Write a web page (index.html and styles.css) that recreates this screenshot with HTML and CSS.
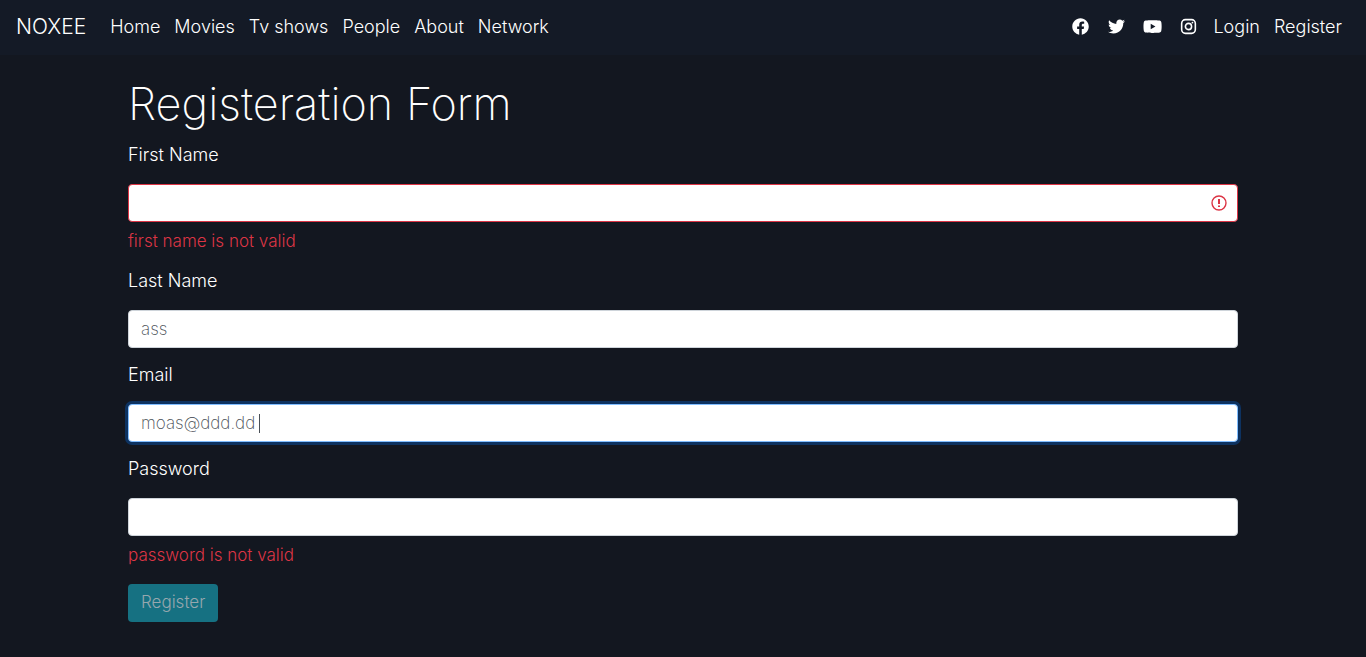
FILE: index.html
```
<!DOCTYPE html>
<html lang="en">
<head>
<meta charset="utf-8">
<meta name="viewport" content="width=device-width, initial-scale=1">
<title>Noxee</title>
<link rel="stylesheet" href="styles.css">
</head>
<body>
<nav class="navbar">
  <a class="brand" href="#">NOXEE</a>
  <ul class="nav-list">
    <li><a href="#">Home</a></li>
    <li><a href="#">Movies</a></li>
    <li><a href="#">Tv shows</a></li>
    <li><a href="#">People</a></li>
    <li><a href="#">About</a></li>
    <li><a href="#">Network</a></li>
  </ul>
  <div class="nav-end">
    <ul class="social">
      <li><a href="#" aria-label="Facebook"><svg viewBox="0 0 512 512"><path d="M504 256C504 119 393 8 256 8S8 119 8 256c0 123.780 90.690 226.380 209.250 245V327.690h-63V256h63v-54.640c0-62.150 37-96.480 93.670-96.480 27.140 0 55.520 4.840 55.520 4.840v61h-31.280c-30.800 0-40.410 19.120-40.410 38.730V256h68.780l-11 71.690h-57.780V501C413.310 482.380 504 379.780 504 256z"/></svg></a></li>
      <li><a href="#" aria-label="Twitter"><svg viewBox="0 0 512 512"><path d="M459.370 151.716c.325 4.548.325 9.097.325 13.645 0 138.720-105.583 298.558-298.558 298.558-59.452 0-114.680-17.219-161.137-47.106 8.447.974 16.568 1.299 25.340 1.299 49.055 0 94.213-16.568 130.274-44.832-46.132-.975-84.792-31.188-98.112-72.772 6.498.974 12.995 1.624 19.818 1.624 9.421 0 18.843-1.300 27.614-3.573-48.081-9.747-84.143-51.980-84.143-102.985v-1.299c13.969 7.797 30.214 12.670 47.431 13.319-28.264-18.843-46.781-51.005-46.781-87.391 0-19.492 5.197-37.360 14.294-52.954 51.655 63.675 129.300 105.258 216.365 109.807-1.624-7.797-2.599-15.918-2.599-24.040 0-57.828 46.782-104.934 104.934-104.934 30.213 0 57.502 12.670 76.670 33.137 23.715-4.548 46.456-13.320 66.599-25.340-7.798 24.366-24.366 44.833-46.132 57.827 21.117-2.273 41.584-8.122 60.426-16.243-14.292 20.791-32.161 39.308-52.628 54.253z"/></svg></a></li>
      <li><a href="#" aria-label="YouTube"><svg viewBox="0 0 576 512"><path d="M549.655 124.083c-6.281-23.650-24.787-42.276-48.284-48.597C458.781 64 288 64 288 64S117.220 64 74.629 75.486c-23.497 6.322-42.003 24.947-48.284 48.597-11.412 42.867-11.412 132.305-11.412 132.305s0 89.438 11.412 132.305c6.281 23.650 24.787 41.500 48.284 47.821C117.220 448 288 448 288 448s170.780 0 213.371-11.486c23.497-6.321 42.003-24.171 48.284-47.821 11.412-42.867 11.412-132.305 11.412-132.305s0-89.438-11.412-132.305zm-317.510 213.508V175.185l142.739 81.205-142.739 81.201z"/></svg></a></li>
      <li><a href="#" aria-label="Instagram"><svg viewBox="0 0 512 512"><g fill="none" stroke="currentColor" stroke-width="48"><rect x="50" y="50" width="412" height="412" rx="112"/><circle cx="256" cy="256" r="93"/></g><circle cx="375" cy="137" r="27"/></svg></a></li>
    </ul>
    <ul class="nav-list">
      <li><a href="#">Login</a></li>
      <li><a href="#">Register</a></li>
    </ul>
  </div>
</nav>
<main class="container">
  <h1>Registeration Form</h1>
  <form class="form">
    <div class="field">
      <label for="first">First Name</label>
      <input class="control invalid" id="first" type="text">
      <p class="error">first name is not valid</p>
    </div>
    <div class="field">
      <label for="last">Last Name</label>
      <input class="control" id="last" type="text" value="ass">
    </div>
    <div class="field">
      <label for="email">Email</label>
      <div class="entry">
        <input class="control" id="email" type="text" value="moas@ddd.dd" autofocus>
        <span class="caret"></span>
      </div>
    </div>
    <div class="field">
      <label for="password">Password</label>
      <input class="control" id="password" type="password">
      <p class="error">password is not valid</p>
    </div>
    <button class="submit" type="submit" disabled>Register</button>
  </form>
</main>
</body>
</html>
```
FILE: styles.css
```
* { box-sizing: border-box; }
body {
  margin: 0;
  background: #131720;
  color: #fff;
  font: 300 17px/24px Inter, "Liberation Sans", sans-serif;
}
a { color: inherit; text-decoration: none; }
ul { display: flex; margin: 0; padding: 0; list-style: none; }
.navbar {
  display: flex;
  align-items: center;
  min-height: 55px;
  padding: 0 24px 2px 16px;
  background: #141a26;
}
.brand { margin-right: 24px; font-size: 21px; }
.nav-list { gap: 14px; font-size: 18px; }
.nav-end { display: flex; align-items: center; gap: 15px; margin-left: auto; }
.social { gap: 16px; }
.social a { display: flex; justify-content: center; width: 20px; }
.social svg { display: block; height: 17px; fill: currentColor; }
.container { max-width: 1142px; margin: 0 auto; padding: 25px 16px 32px; }
h1 { margin: 0 0 16px; font-size: 45px; line-height: 48px; font-weight: 200; }
.form, .field { display: flex; flex-direction: column; }
.form { gap: 16px; }
label { margin-bottom: 18px; align-self: flex-start; font-size: 18px; line-height: 22px; }
.entry { position: relative; display: flex; }
.control {
  width: 100%;
  height: 38px;
  padding: 6px 12px;
  border: 1px solid #ced4da;
  border-radius: 4px;
  background: #fff;
  color: #495057;
  font: inherit;
  font-weight: 200;
}
.control:focus {
  outline: 0;
  border-color: #80bdff;
  box-shadow: 0 0 0 3px #0d3260;
  caret-color: transparent;
}
.caret {
  display: none;
  position: absolute;
  top: 10px;
  left: 131px;
  width: 1px;
  height: 19px;
  background: #495057;
}
.control:focus + .caret { display: block; }
.invalid {
  border-color: #dc3545;
  padding-right: 38px;
  background: #fff url("data:image/svg+xml,%3Csvg xmlns='http://www.w3.org/2000/svg' viewBox='0 0 18 18' fill='none' stroke='%23dc3545'%3E%3Ccircle cx='9' cy='9' r='7' stroke-width='1.4'/%3E%3Cpath d='M9 5v5M9 11.500v1.500' stroke-width='2'/%3E%3C/svg%3E") no-repeat right 9px center / 18px 18px;
}
.error { margin: 8px 0 2px; color: #dc3545; line-height: 22px; }
.submit {
  align-self: flex-start;
  height: 38px;
  padding: 0 13px 2px;
  border: 0;
  border-radius: 4px;
  background: #167182;
  color: #96a7ae;
  font: inherit;
}
```
